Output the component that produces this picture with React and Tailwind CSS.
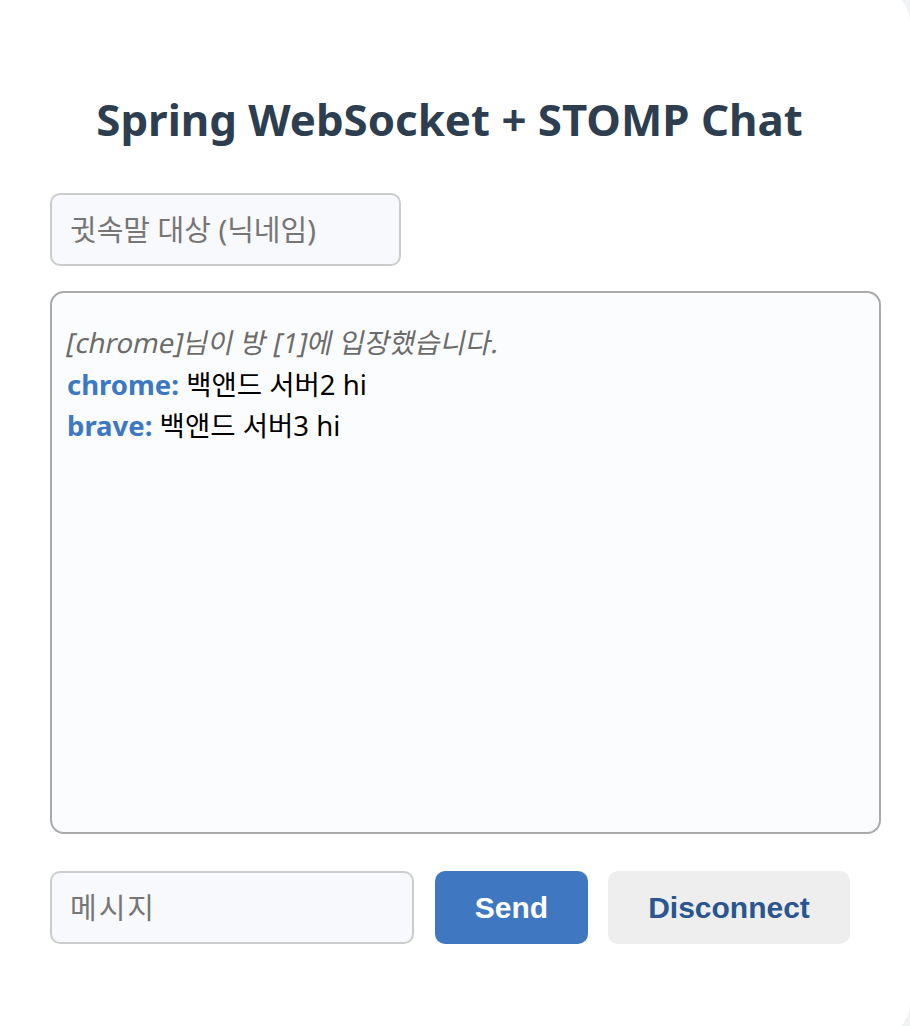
const MESSAGES = [
  { type: 'system', text: '[chrome]님이 방 [1]에 입장했습니다.' },
  { type: 'chat', sender: 'chrome', text: '백앤드 서버2 hi' },
  { type: 'chat', sender: 'brave', text: '백앤드 서버3 hi' },
]

const FONT = "font-['Noto_Sans','Noto_Sans_CJK_KR',sans-serif]"

function Line({ msg }) {
  if (msg.type === 'system') {
    // synthetic oblique, like the original system font
    return (
      <div>
        <span className="inline-block -skew-x-12 text-[#6b6b6b]">{msg.text}</span>
      </div>
    )
  }
  return (
    <div className="text-black">
      <span className="font-bold text-[#3d78c0]">{msg.sender}:</span> {msg.text}
    </div>
  )
}

export default function App() {
  return (
    <div className={`w-[910px] h-[1026px] overflow-hidden bg-[#f1f2f4] ${FONT}`}>
      <div className="-mt-[10px] -ml-[40px] w-[950px] h-[1046px] rounded-[32px] bg-white pl-[90px] pr-[29px] pt-[101px]">
        <h1 className="pr-[32px] text-center text-[43.8px] leading-[56px] font-bold text-[#2c3e50]">
          Spring WebSocket + STOMP Chat
        </h1>

        <input
          className="mt-[46px] block w-[351px] h-[73px] rounded-[10px] border-2 border-[#cccccc] bg-[#f8f9fc] pl-[18px] text-[29px] text-[#333] placeholder:text-[#767676] outline-none"
          placeholder="귓속말 대상 (닉네임)"
        />

        {/* chat log */}
        <div className="mt-[25px] h-[543px] rounded-[14px] border-2 border-[#aaaaaa] bg-[#fbfcfe] pl-[15px] pt-[29px] text-[27.5px] leading-[41.6px]">
          {MESSAGES.map((m, i) => (
            <Line key={i} msg={m} />
          ))}
        </div>

        <div className="mt-[37px] flex items-center">
          <input
            className="block w-[364px] h-[73px] rounded-[10px] border-2 border-[#cccccc] bg-[#f8f9fc] pl-[18px] text-[29px] tracking-[2px] text-[#333] placeholder:text-[#767676] outline-none"
            placeholder="메시지"
          />
          <button className="ml-[21px] w-[153px] h-[73px] rounded-[10px] bg-[#3f78c1] text-white text-[30px] font-bold font-['Liberation_Sans',Arial,sans-serif]">
            Send
          </button>
          <button className="ml-[20px] w-[242px] h-[73px] rounded-[10px] bg-[#eeeeee] text-[#2a5591] text-[30px] font-bold font-['Liberation_Sans',Arial,sans-serif]">
            Disconnect
          </button>
        </div>
      </div>
    </div>
  )
}
